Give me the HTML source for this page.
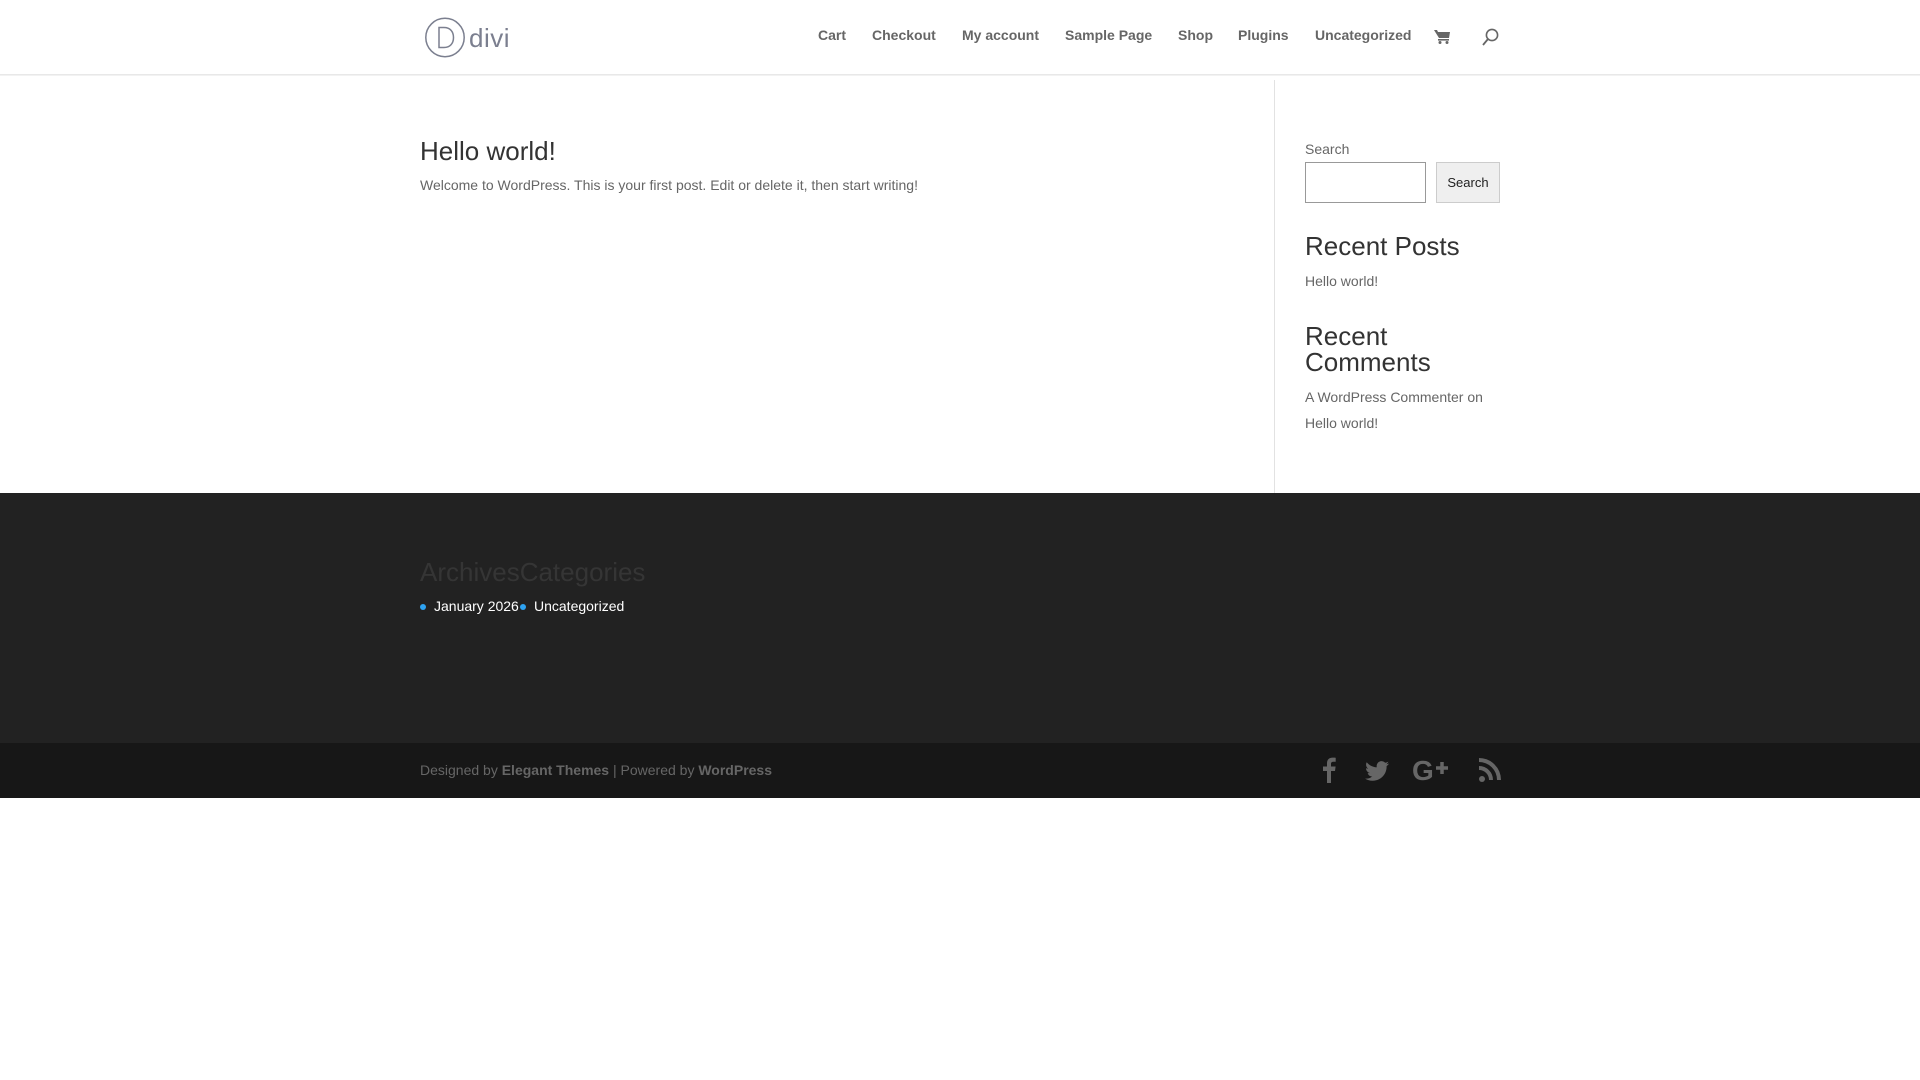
<!DOCTYPE html>
<html><head><meta charset="utf-8"><style>
*{margin:0;padding:0;box-sizing:border-box}
body{width:1920px;height:1080px;background:#fff;font-family:"Liberation Sans",Arial,sans-serif;position:relative;overflow:hidden;color:#666;font-size:14px}
.a{position:absolute;white-space:nowrap}
#hdr{position:absolute;left:0;top:0;width:1920px;height:75px;border-bottom:1px solid #e8e8e8;box-shadow:0 1px 0 rgba(0,0,0,.05)}
.nav{font-weight:bold;color:#666;font-size:14px;top:27px}
h1,h2{font-weight:normal}
.bul{position:absolute;width:6px;height:6px;border-radius:50%;background:#2ea3f2}
</style></head><body>
<div id="hdr"></div>
<svg class="a" style="left:425px;top:17px" width="90" height="42" viewBox="0 0 90 42">
<circle cx="20" cy="20.5" r="19.2" fill="none" stroke="#7b7f8f" stroke-width="1.5"/>
<path d="M14 10.5v20h5c6 0 9.5-4 9.5-10s-3.5-10-9.5-10z" fill="none" stroke="#7b7f8f" stroke-width="1.5"/>
<text x="44" y="30" font-family="Liberation Sans" font-size="26" font-weight="300" fill="#7b7f8f" letter-spacing="0.5">divi</text>
</svg>
<div class="a nav" style="left:818px">Cart</div>
<div class="a nav" style="left:872px">Checkout</div>
<div class="a nav" style="left:962px">My account</div>
<div class="a nav" style="left:1065px">Sample Page</div>
<div class="a nav" style="left:1178px">Shop</div>
<div class="a nav" style="left:1238px">Plugins</div>
<div class="a nav" style="left:1315px">Uncategorized</div>
<svg class="a" style="left:1434px;top:28px" width="17" height="17" viewBox="0 0 17 17"><path d="M0 2h3l1 2h12l-1 6H5z" fill="#666"/><rect x="4" y="11" width="11" height="1.6" fill="#666"/><circle cx="6" cy="14.5" r="1.5" fill="#666"/><circle cx="13" cy="14.5" r="1.5" fill="#666"/></svg>
<svg class="a" style="left:1481px;top:28px" width="18" height="20" viewBox="0 0 18 20"><circle cx="11" cy="7" r="5.6" fill="none" stroke="#666" stroke-width="1.6"/><path d="M7 11L2 17" stroke="#666" stroke-width="1.8"/></svg>

<div class="a" style="left:1274px;top:80px;width:1px;height:413px;background:#e2e2e2"></div>
<h1 class="a" style="left:420px;top:136px;font-size:26px;color:#333">Hello world!</h1>
<div class="a" style="left:420px;top:177px">Welcome to WordPress. This is your first post. Edit or delete it, then start writing!</div>

<div class="a" style="left:1305px;top:141px">Search</div>
<div class="a" style="left:1305px;top:162px;width:121px;height:41px;border:1px solid #999"></div>
<div class="a" style="left:1436px;top:162px;width:64px;height:41px;border:1px solid #ccc;background:#efefef;color:#222;font-size:13px;line-height:39px;text-align:center">Search</div>
<h2 class="a" style="left:1305px;top:231px;font-size:26px;color:#333">Recent Posts</h2>
<div class="a" style="left:1305px;top:273px">Hello world!</div>
<h2 class="a" style="left:1305px;top:323px;font-size:26px;color:#333;line-height:26px;white-space:normal;width:195px">Recent Comments</h2>
<div class="a" style="left:1305px;top:389px">A WordPress Commenter on</div>
<div class="a" style="left:1305px;top:415px">Hello world!</div>

<div class="a" style="left:0;top:493px;width:1920px;height:250px;background:#222"></div>
<h2 class="a" style="left:420px;top:557px;font-size:26px;color:#353535">ArchivesCategories</h2>
<div class="bul" style="left:420px;top:604px"></div>
<div class="a" style="left:434px;top:598px;color:#fff">January 2026</div>
<div class="bul" style="left:520px;top:604px"></div>
<div class="a" style="left:534px;top:598px;color:#fff">Uncategorized</div>

<div class="a" style="left:0;top:743px;width:1920px;height:55px;background:#171717"></div>
<div class="a" style="left:420px;top:762px;color:#666">Designed by <b>Elegant Themes</b> | Powered by <b>WordPress</b></div>
<svg class="a" style="left:1320px;top:757px" width="185" height="26" viewBox="0 0 185 26">
<path d="M12 25V13h4l.6-4.5H12V6c0-1.3.4-2.2 2.3-2.2h2.4V-.2C16.3-.3 15 -.4 13.5-.4 10.3-.4 8 1.6 8 5.2v3.3H4V13h4v12z" fill="#666" transform="translate(-1,1)"/>
<path d="M70 6.5c-.9.4-1.8.6-2.8.8 1-.6 1.8-1.6 2.1-2.7-.9.6-2 1-3.1 1.2a4.9 4.9 0 0 0-8.4 4.5c-4.1-.2-7.7-2.2-10.1-5.1-1.3 2.3-.5 5.1 1.5 6.5-.8 0-1.6-.3-2.2-.6 0 2.4 1.7 4.4 3.9 4.9-.7.2-1.5.2-2.2.1.6 2 2.4 3.4 4.6 3.4a9.9 9.9 0 0 1-7.3 2 14 14 0 0 0 21.6-12.4c1-.7 1.8-1.5 2.4-2.6z" fill="#666" transform="translate(-1,0)"/>
<text x="92" y="23" font-family="Liberation Sans" font-weight="bold" font-size="28" fill="#666">G</text>
<path d="M116 11h12M122 5v12" stroke="#666" stroke-width="3.5"/>
<circle cx="162" cy="22" r="3" fill="#666"/>
<path d="M159 11a12 12 0 0 1 12 12M159 3a20 20 0 0 1 20 20" fill="none" stroke="#666" stroke-width="4"/>
</svg>
</body></html>
